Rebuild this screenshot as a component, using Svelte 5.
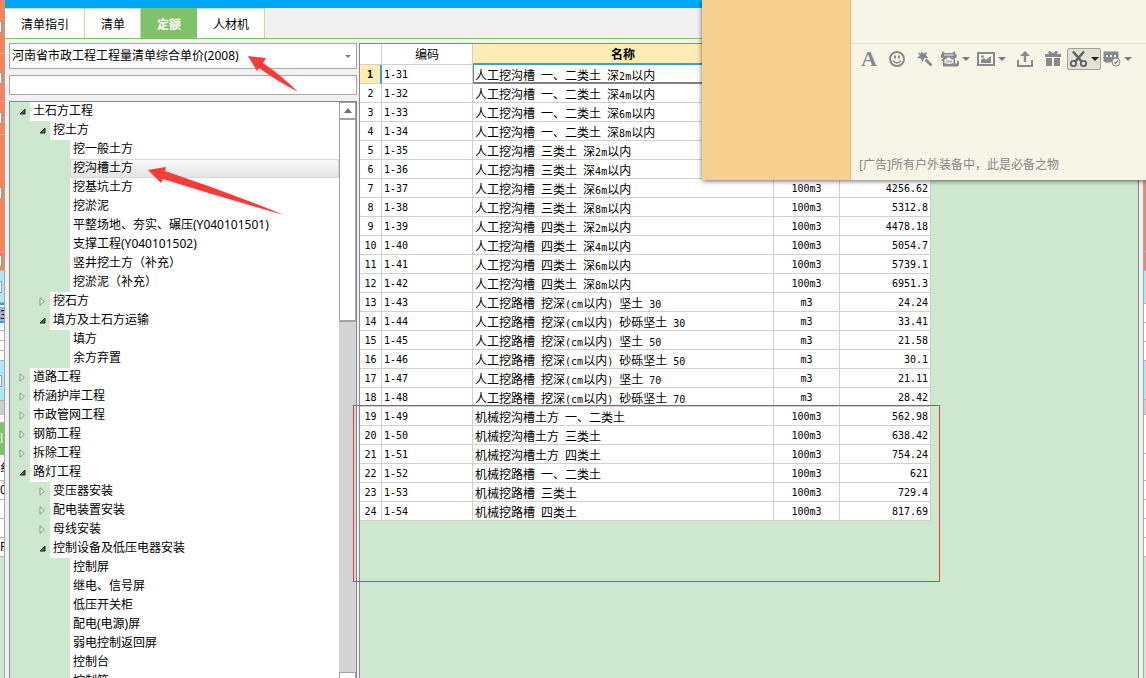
<script lang="ts">
  type TreeNode = { level: number; label: string; state?: "open" | "closed" };
  type Block = { h: number; kind: string; box?: boolean; text?: string };

  const tabs = ["清单指引", "清单", "定额", "人材机"];
  let activeTab = $state("定额");
  let selectedNode = $state("挖沟槽土方");
  let selectedRow = $state(0);
  let keyword = $state("");

  const nodes: TreeNode[] = [
    { level: 0, label: "土石方工程", state: "open" },
    { level: 1, label: "挖土方", state: "open" },
    { level: 2, label: "挖一般土方" },
    { level: 2, label: "挖沟槽土方" },
    { level: 2, label: "挖基坑土方" },
    { level: 2, label: "挖淤泥" },
    { level: 2, label: "平整场地、夯实、碾压(Y040101501)" },
    { level: 2, label: "支撑工程(Y040101502)" },
    { level: 2, label: "竖井挖土方（补充）" },
    { level: 2, label: "挖淤泥（补充）" },
    { level: 1, label: "挖石方", state: "closed" },
    { level: 1, label: "填方及土石方运输", state: "open" },
    { level: 2, label: "填方" },
    { level: 2, label: "余方弃置" },
    { level: 0, label: "道路工程", state: "closed" },
    { level: 0, label: "桥涵护岸工程", state: "closed" },
    { level: 0, label: "市政管网工程", state: "closed" },
    { level: 0, label: "钢筋工程", state: "closed" },
    { level: 0, label: "拆除工程", state: "closed" },
    { level: 0, label: "路灯工程", state: "open" },
    { level: 1, label: "变压器安装", state: "closed" },
    { level: 1, label: "配电装置安装", state: "closed" },
    { level: 1, label: "母线安装", state: "closed" },
    { level: 1, label: "控制设备及低压电器安装", state: "open" },
    { level: 2, label: "控制屏" },
    { level: 2, label: "继电、信号屏" },
    { level: 2, label: "低压开关柜" },
    { level: 2, label: "配电(电源)屏" },
    { level: 2, label: "弱电控制返回屏" },
    { level: 2, label: "控制台" },
    { level: 2, label: "控制箱" },
  ];

  const rows = [
    ["1-31", "人工挖沟槽 一、二类土 深2m以内", "", ""],
    ["1-32", "人工挖沟槽 一、二类土 深4m以内", "", ""],
    ["1-33", "人工挖沟槽 一、二类土 深6m以内", "", ""],
    ["1-34", "人工挖沟槽 一、二类土 深8m以内", "", ""],
    ["1-35", "人工挖沟槽 三类土 深2m以内", "", ""],
    ["1-36", "人工挖沟槽 三类土 深4m以内", "", ""],
    ["1-37", "人工挖沟槽 三类土 深6m以内", "100m3", "4256.62"],
    ["1-38", "人工挖沟槽 三类土 深8m以内", "100m3", "5312.8"],
    ["1-39", "人工挖沟槽 四类土 深2m以内", "100m3", "4478.18"],
    ["1-40", "人工挖沟槽 四类土 深4m以内", "100m3", "5054.7"],
    ["1-41", "人工挖沟槽 四类土 深6m以内", "100m3", "5739.1"],
    ["1-42", "人工挖沟槽 四类土 深8m以内", "100m3", "6951.3"],
    ["1-43", "人工挖路槽 挖深(cm以内) 坚土 30", "m3", "24.24"],
    ["1-44", "人工挖路槽 挖深(cm以内) 砂砾坚土 30", "m3", "33.41"],
    ["1-45", "人工挖路槽 挖深(cm以内) 坚土 50", "m3", "21.58"],
    ["1-46", "人工挖路槽 挖深(cm以内) 砂砾坚土 50", "m3", "30.1"],
    ["1-47", "人工挖路槽 挖深(cm以内) 坚土 70", "m3", "21.11"],
    ["1-48", "人工挖路槽 挖深(cm以内) 砂砾坚土 70", "m3", "28.42"],
    ["1-49", "机械挖沟槽土方 一、二类土", "100m3", "562.98"],
    ["1-50", "机械挖沟槽土方 三类土", "100m3", "638.42"],
    ["1-51", "机械挖沟槽土方 四类土", "100m3", "754.24"],
    ["1-52", "机械挖路槽 一、二类土", "100m3", "621"],
    ["1-53", "机械挖路槽 三类土", "100m3", "729.4"],
    ["1-54", "机械挖路槽 四类土", "100m3", "817.69"],
  ];

  // slices of the window behind, visible at both edges
  const leftBlocks: Block[] = [
    { h: 54, kind: "orange", box: true },
    { h: 48, kind: "orange", box: true },
    { h: 33, kind: "orange", box: true },
    { h: 117, kind: "orange", box: true },
    { h: 19, kind: "orange", box: true },
    { h: 32, kind: "sky", box: true },
    { h: 5, kind: "line" },
    { h: 15, kind: "picked", text: "3" },
    { h: 8, kind: "plain" },
    { h: 10, kind: "plain" },
    { h: 10, kind: "plain" },
    { h: 10, kind: "plain" },
    { h: 40, kind: "sky", box: true },
    { h: 14, kind: "gray" },
    { h: 8, kind: "plain" },
    { h: 32, kind: "green", text: "l" },
    { h: 26, kind: "plain", text: "纟" },
    { h: 19, kind: "plain", text: "0" },
    { h: 19, kind: "plain" },
    { h: 19, kind: "plain" },
    { h: 19, kind: "plain", text: "R" },
  ];
  const rightBlocks: Block[] = [
    { h: 252, kind: "orange" },
    { h: 19, kind: "orange" },
    { h: 33, kind: "sky" },
    { h: 19, kind: "plain" },
    { h: 19, kind: "plain" },
    { h: 19, kind: "plain" },
    { h: 39, kind: "sky" },
    { h: 15, kind: "gray" },
    { h: 39, kind: "plain" },
    { h: 27, kind: "plain" },
    { h: 19, kind: "plain" },
    { h: 19, kind: "plain" },
    { h: 19, kind: "plain" },
    { h: 19, kind: "plain" },
  ];

  // separates half-width runs from Chinese runs
  function runs(text: string) {
    return text.split(/([\x20-\x7e]+)/).filter((s) => s !== "");
  }
</script>

{#snippet edge(blocks: Block[])}
  {#each blocks as b}
    <div class="block {b.kind}" style="height: {b.h}px">
      {#if b.box}<i class="box"></i>{/if}
      {#if b.text}<span>{b.text}</span>{/if}
    </div>
  {/each}
{/snippet}

<div class="screen">
  <div class="edge left">{@render edge(leftBlocks)}</div>

  <main>
    <div class="titlebar"></div>
    <nav class="tabs">
      {#each tabs as tab}
        <button class:active={tab === activeTab} onclick={() => (activeTab = tab)}>{tab}</button>
      {/each}
    </nav>

    <div class="panes">
      <section class="side">
        <div class="combo">
          <select aria-label="定额库">
            <option>河南省市政工程工程量清单综合单价(2008)</option>
          </select>
          <i class="caret"></i>
        </div>
        <input type="text" aria-label="查询" bind:value={keyword} />

        <div class="tree">
          <ul>
            {#each nodes as node}
              <li class="level{node.level}">
                <span class="indent">
                  {#if node.state === "open"}
                    <svg width="8" height="8" viewBox="0 0 8 8"><path d="M7 1V6H2Z" fill="#555" stroke="#222" /></svg>
                  {:else if node.state === "closed"}
                    <svg width="8" height="9" viewBox="0 0 8 9"><path d="M2 .8V8.2L6.3 4.5Z" fill="#e4f3e6" stroke="#8a948c" /></svg>
                  {/if}
                </span>
                <button
                  class="label"
                  class:selected={node.label === selectedNode}
                  onclick={() => (selectedNode = node.label)}>{node.label}</button>
              </li>
            {/each}
          </ul>
          <div class="scrollbar">
            <div class="up"><i></i></div>
            <div class="thumb"></div>
            <div class="track"></div>
            <div class="down"></div>
          </div>
        </div>
      </section>

      <section class="grid">
        <table>
          <colgroup>
            <col class="c-no" /><col class="c-code" /><col class="c-name" /><col class="c-unit" /><col class="c-price" />
          </colgroup>
          <thead>
            <tr><th></th><th>编码</th><th class="current">名称</th><th></th><th></th></tr>
          </thead>
          <tbody>
            {#each rows as [code, name, unit, price], i}
              <tr class:selected={i === selectedRow} onclick={() => (selectedRow = i)}>
                <td class="no">{i + 1}</td>
                <td class="code">{code}</td>
                <td class="name">{#each runs(name) as run}<span class:half={/^[\x20-\x7e]/.test(run)}>{run}</span>{/each}</td>
                <td class="unit">{unit}</td>
                <td class="price">{price}</td>
              </tr>
            {/each}
          </tbody>
        </table>
      </section>
    </div>
  </main>

  <div class="edge right">{@render edge(rightBlocks)}</div>

  <aside class="chat">
    <div class="chat-list"></div>
    <div class="chat-body">
      <div class="toolbar">
        <button aria-label="字体" class="font">A</button>
        <button aria-label="表情">
          <svg width="18" height="18" viewBox="0 0 18 18">
            <circle cx="9" cy="9" r="7" fill="none" stroke="#858a8e" stroke-width="2" />
            <path d="M6 5.5h2v3H6zM10 5.5h2v3h-2z" fill="#858a8e" />
            <path d="M5 10.5Q9 15.5 13 10.5" fill="none" stroke="#858a8e" stroke-width="1.5" />
          </svg>
        </button>
        <button aria-label="魔法表情">
          <svg width="18" height="18" viewBox="0 0 18 18" fill="#858a8e">
            <path d="M5.500 1L7.500 3.500L11 2L10 5.500L12.500 8L8.500 8L6.500 12L5 8.500L1 8L3.800 5.500L1.500 2.500L5 3.500Z" />
            <path d="M10.500 8.500L16.500 14.500L14.500 16.500L8.500 10.500Z" />
          </svg>
        </button>
        <button aria-label="动作" class="drop">
          <svg width="20" height="18" viewBox="0 0 20 18">
            <path d="M2 1L5 3H12L15 1V4H16.500V8H15V13.500H17V11H19V15L17.500 16.500H3V11H1.500V9H3V8H1V4H2Z" fill="#858a8e" />
            <path d="M4 4.500h9.500v1H4zM4.500 9.500Q6.500 9.500 7.500 7.500H10Q11 9.500 13.500 9.500V13Q9 15 4.500 13Z" fill="#f7f5e8" />
            <path d="M6 10.500h6v2H6z" fill="#b5b6b2" />
          </svg>
          <i class="caret"></i>
        </button>
        <button aria-label="图片" class="drop">
          <svg width="20" height="18" viewBox="0 0 20 18">
            <path d="M2 3H18V15H2Z" fill="none" stroke="#858a8e" stroke-width="2" />
            <path d="M5 13V10L8 8L10 10L15 6V13Z" fill="#858a8e" />
            <circle cx="6.500" cy="6.500" r="1.300" fill="#858a8e" />
          </svg>
          <i class="caret"></i>
        </button>
        <button aria-label="发送文件">
          <svg width="18" height="18" viewBox="0 0 18 18">
            <path d="M2 10V16H16V10" fill="none" stroke="#858a8e" stroke-width="2" />
            <path d="M9 1L14 6H10.200V12H7.800V6H4Z" fill="#858a8e" />
          </svg>
        </button>
        <button aria-label="礼物">
          <svg width="18" height="18" viewBox="0 0 18 18" fill="#858a8e">
            <path d="M1 4H5L4 2L6 1L9 3.500L12 1L14 2L13 4H17V7H1ZM2 8H8V16H2ZM10 8H16V16H10Z" />
          </svg>
        </button>
        <button aria-label="截图" class="drop active">
          <svg width="20" height="18" viewBox="0 0 20 18" fill="none" stroke="#5c6165">
            <path d="M4 1.500L13 12M15 1.500L6 12" stroke-width="2.500" />
            <circle cx="4.500" cy="13.500" r="2.700" stroke-width="1.800" />
            <circle cx="14.500" cy="13.500" r="2.700" stroke-width="1.800" />
          </svg>
          <i class="caret"></i>
        </button>
        <button aria-label="消息记录" class="drop">
          <svg width="20" height="18" viewBox="0 0 20 18">
            <path d="M2 2H16V9H11L9 12H4L2 11Z" fill="#858a8e" stroke="#858a8e" stroke-linejoin="round" />
            <path d="M4 5h2v2H4zM8 5h2v2H8zM12 5h2v2h-2z" fill="#f7f5e8" />
            <circle cx="14" cy="12" r="4" fill="#f7f5e8" stroke="#858a8e" />
            <path d="M12 12L13.500 13.500L16 10.500" fill="none" stroke="#858a8e" stroke-width="1.200" />
          </svg>
          <i class="caret"></i>
        </button>
      </div>
      <a class="ad" href="#ad">[广告]所有户外装备中，此是必备之物</a>
    </div>
  </aside>

  <svg class="arrow first" width="52" height="38" viewBox="0 0 52 38">
    <path d="M1 1L19 3L16 8Q34 20 51 37Q30 26 12 13L10 16Z" fill="#fb3b38" />
  </svg>
  <svg class="arrow second" width="138" height="50" viewBox="0 0 138 50">
    <path d="M1 4L19 1L18 5Q78 25 137 49Q76 32 16 13L14 17Z" fill="#fb3b38" />
  </svg>
  <div class="marker"></div>
</div>

<style>
  :global(body) {
    margin: 0;
    overflow: hidden;
  }

  .screen {
    position: relative;
    display: flex;
    height: 100vh;
    overflow: hidden;
    background: #f1f1f1;
    color: #000;
    font: 12px/18px "Noto Sans", "Noto Sans CJK SC", sans-serif;
  }

  button,
  input,
  select {
    box-sizing: border-box;
    margin: 0;
    padding: 0;
    border: 0;
    border-radius: 0;
    background: none;
    color: inherit;
    font: inherit;
  }

  /* edges of the window behind */
  .edge {
    flex: none;
    box-sizing: border-box;
    overflow: hidden;
    background: #cde8cf;
  }

  .left {
    width: 5px;
    border-right: 1px solid #a5a5a5;
  }

  .right {
    width: 3px;
    border-left: 1px solid #a5a5a5;
  }

  .block {
    display: flex;
    box-sizing: border-box;
    align-items: center;
    justify-content: flex-end;
    overflow: hidden;
    border-bottom: 1px solid #b4b4b4;
    background: #fff;
  }

  .left .block {
    justify-content: flex-start;
  }

  .block.orange {
    background: #fa835c;
  }

  .block.sky {
    background: #abe8fa;
  }

  .block.line {
    border-top: 2px solid #36a1d2;
  }

  .block.picked {
    border-bottom: 2px solid #36a1d2;
    background: #a0b8e5;
  }

  .block.gray {
    background: #cecece;
  }

  .block.green {
    border-color: #80c269;
    background: #80c269;
    color: #fff;
  }

  .box {
    box-sizing: border-box;
    width: 2px;
    height: 12px;
    border: 1px solid #8fa0a6;
    border-width: 1px 1px 1px 0;
    background: #fff;
  }

  main {
    display: flex;
    flex: 1;
    flex-direction: column;
    min-width: 0;
  }

  .titlebar {
    flex: none;
    height: 8px;
    background: #00a8f3;
  }

  .tabs {
    display: flex;
    flex: none;
    height: 30px;
    border-bottom: 1px solid #80c269;
  }

  .tabs button {
    padding: 3px 15px 0 16px;
    border-top: 1px solid #b4e6a0;
    border-right: 1px solid #b4e6a0;
    background: #fff;
  }

  .tabs button.active {
    border-color: #80c269;
    background: #80c269;
    color: #fff;
    font-weight: bold;
  }

  .panes {
    display: flex;
    flex: 1;
    gap: 2px;
    min-height: 0;
    padding: 4px 4px 0 4px;
  }

  .side {
    display: flex;
    flex: none;
    flex-direction: column;
    gap: 6px;
    width: 348px;
  }

  .combo {
    position: relative;
    display: flex;
    flex: none;
    height: 26px;
  }

  .combo select {
    flex: 1;
    padding: 0 2px;
    border: 1px solid #a8a8a8;
    appearance: none;
    background: #fff;
  }

  .combo .caret {
    position: absolute;
    top: 12px;
    right: 6px;
  }

  .caret {
    border: 3px solid transparent;
    border-top: 3px solid #777b84;
    border-bottom: 0;
  }

  .side input {
    flex: none;
    height: 20px;
    padding: 0 3px;
    border: 1px solid #a8a8a8;
    background: #fff;
  }

  .tree {
    display: flex;
    flex: 1;
    min-height: 0;
    overflow: hidden;
    border: 1px solid #858a92;
    border-bottom: 0;
    background: #cde8cf;
  }

  ul {
    flex: 1;
    min-width: 0;
    margin: 0;
    padding: 0;
    list-style: none;
  }

  li {
    display: flex;
    height: 19px;
  }

  .indent {
    display: flex;
    flex: none;
    box-sizing: border-box;
    align-items: center;
    justify-content: flex-end;
    width: 20px;
    padding-right: 4px;
  }

  .level1 .indent {
    width: 40px;
  }

  .level2 .indent {
    width: 60px;
  }

  .label {
    flex: 1;
    padding: 0 2px 2px;
    border: 1px solid #fff;
    background: #fff;
    line-height: 15px;
    text-align: left;
    white-space: nowrap;
  }

  .label.selected {
    border-color: #d8d8d8;
    border-radius: 3px;
    background: linear-gradient(#f9f9f9, #e5e5e5);
  }

  .scrollbar {
    display: flex;
    flex: none;
    flex-direction: column;
    width: 17px;
    background: #d3d3d3;
  }

  .up,
  .thumb,
  .down {
    box-sizing: border-box;
    border: 1px solid #a2a2a2;
    background: #fff;
  }

  .up {
    display: flex;
    align-items: center;
    justify-content: center;
    height: 17px;
  }

  .up i {
    border: 4px solid transparent;
    border-top: 0;
    border-bottom: 5px solid #6b6d80;
  }

  .thumb {
    height: 203px;
    border-bottom-width: 2px;
  }

  .track {
    flex: 1;
  }

  .down {
    height: 6px;
    border-bottom: 0;
  }

  .grid {
    flex: 1;
    min-width: 0;
    overflow: hidden;
    border: 1px solid #858a92;
    border-bottom: 0;
    background: #cde8cf;
  }

  table {
    border-collapse: separate;
    border-spacing: 0;
    table-layout: fixed;
    width: 571px;
    background: #fff;
  }

  .c-no {
    width: 22px;
  }

  .c-code {
    width: 91px;
  }

  .c-name {
    width: 301px;
  }

  .c-unit {
    width: 66px;
  }

  .c-price {
    width: 91px;
  }

  th,
  td {
    box-sizing: border-box;
    overflow: hidden;
    border-right: 1px solid #d0d0d0;
    border-bottom: 1px solid #d0d0d0;
    white-space: pre;
  }

  th {
    height: 21px;
    padding: 2px 0 0;
    font-weight: normal;
  }

  th.current {
    border-bottom: 2px solid #36a1d2;
    background: #ffecb3;
    font-weight: bold;
    line-height: 17px;
  }

  td {
    height: 19px;
    padding: 2px 2px 0;
    font-family: "DejaVu Sans Mono", monospace;
    font-size: 10px;
    line-height: 14px;
  }

  td.no {
    padding: 2px 0 0;
    text-align: center;
  }

  td.name {
    font-family: "Noto Sans CJK SC", sans-serif;
    font-size: 12px;
  }

  .half {
    font-family: "DejaVu Sans Mono", monospace;
    font-size: 10px;
    line-height: 10px;
  }

  td.unit {
    text-align: center;
  }

  td.price {
    text-align: right;
  }

  tr.selected .no {
    border-right: 2px solid #36a1d2;
    background: #ffecb3;
    font-weight: bold;
  }

  tr.selected .name {
    padding-left: 1px;
    border-bottom: 2px solid #808080;
    border-left: 1px solid #808080;
  }

  /* chat window lying over the grid */
  .chat {
    position: absolute;
    top: 0;
    right: 0;
    display: flex;
    width: 444px;
    height: 180px;
    border-radius: 0 0 0 3px;
    box-shadow: 0 1px 5px rgba(0, 0, 0, 0.6);
    background: #f7f5e8;
  }

  .chat-list {
    width: 148px;
    border-right: 1px solid #e9bd7d;
    border-radius: 0 0 0 3px;
    background: #f7d090;
  }

  .chat-body {
    display: flex;
    flex: 1;
    flex-direction: column;
    justify-content: space-between;
    padding-top: 43px;
  }

  .toolbar {
    display: flex;
    align-items: center;
    height: 29px;
    padding-left: 4px;
    border-top: 1px solid #e3e1d5;
  }

  .toolbar button {
    display: flex;
    flex: none;
    align-items: center;
    justify-content: center;
    width: 28px;
    height: 22px;
  }

  .toolbar .font {
    color: #858a8e;
    font: bold 22px/22px "Liberation Serif", serif;
  }

  .toolbar .drop {
    gap: 2px;
    width: 36px;
    padding-right: 4px;
  }

  .toolbar .caret {
    border-width: 4px 4px 0;
  }

  .toolbar .active {
    width: 34px;
    padding: 0;
    border: 1px solid #a3a39c;
    border-radius: 2px;
    background: #e3e1d5;
  }

  .active .caret {
    border-top-color: #222;
  }

  .ad {
    padding: 0 8px 6px;
    color: #858585;
    text-decoration: none;
  }

  /* annotations drawn over the windows */
  .arrow {
    position: absolute;
  }

  .first {
    top: 55px;
    left: 247px;
  }

  .second {
    top: 166px;
    left: 147px;
  }

  .marker {
    position: absolute;
    top: 405px;
    left: 353px;
    box-sizing: border-box;
    width: 587px;
    height: 177px;
    border: 1px solid #ee3b3b;
  }
</style>
